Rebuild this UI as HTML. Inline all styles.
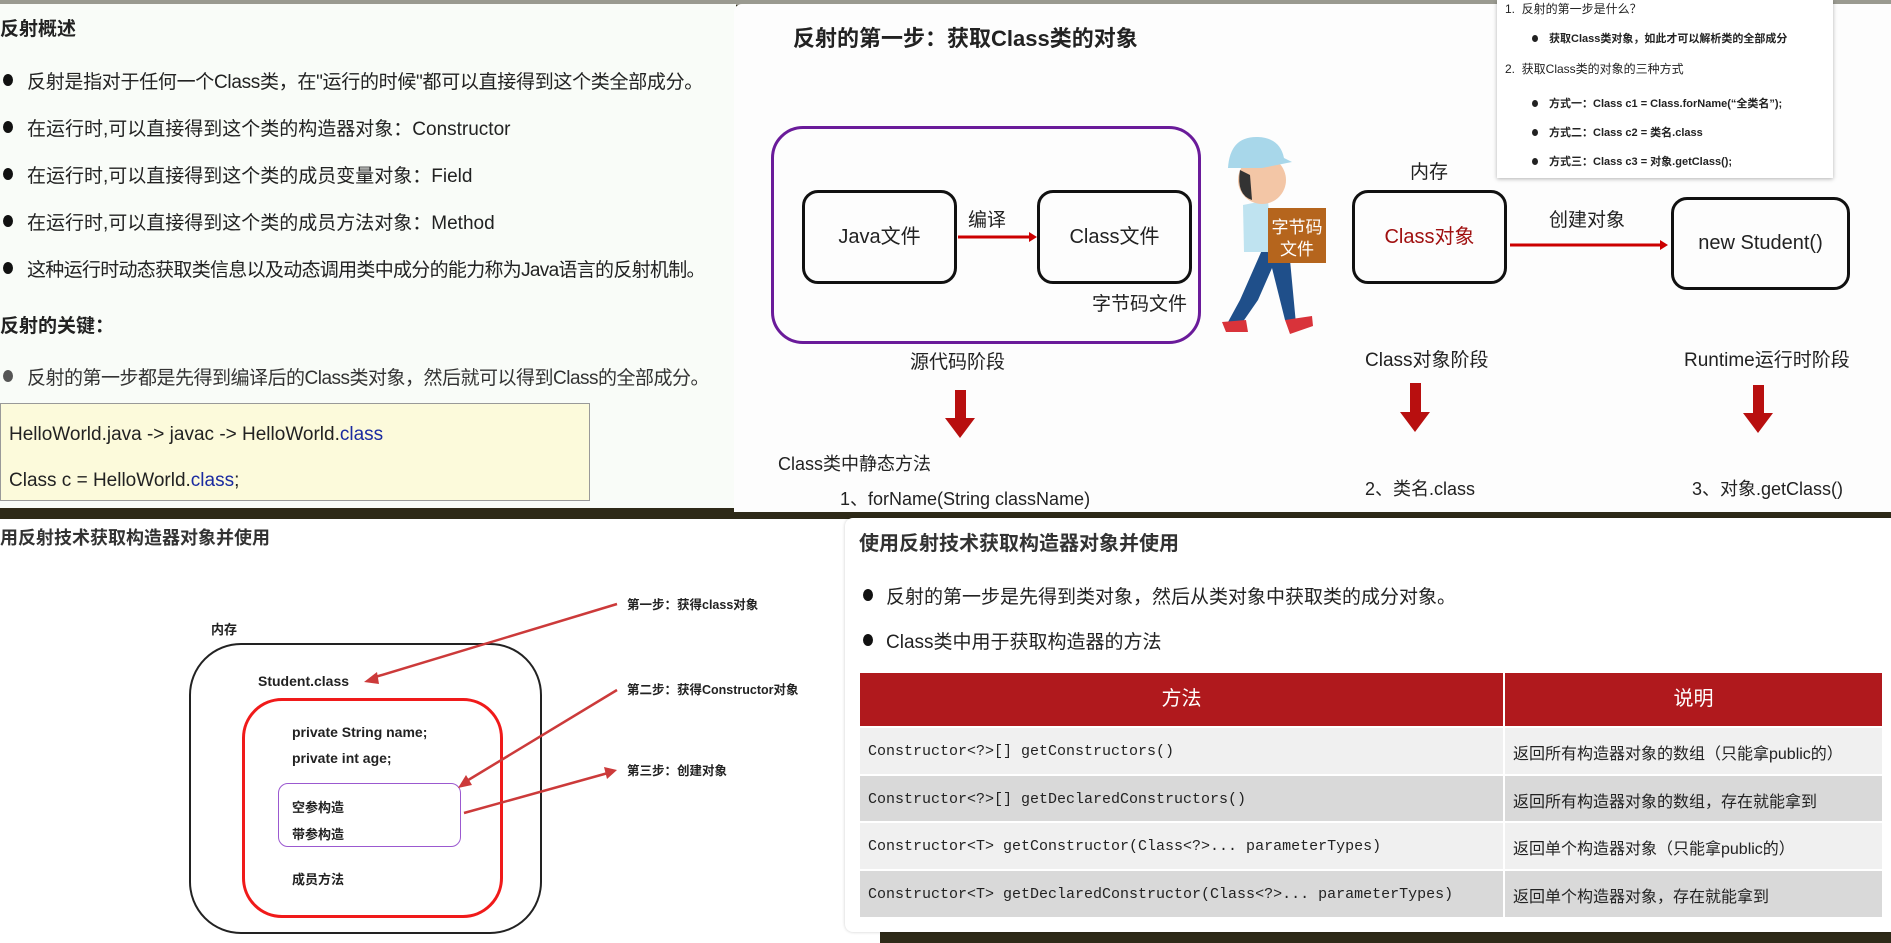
<!DOCTYPE html>
<html><head><meta charset="utf-8">
<style>
*{margin:0;padding:0;box-sizing:border-box}
body{width:1891px;height:943px;overflow:hidden;background:#2e2a18;position:relative;font-family:"Liberation Sans","Noto Sans CJK SC",sans-serif;color:#222}
.a{position:absolute;white-space:nowrap}
.b{font-weight:bold}
.dot{position:absolute;width:10px;height:12px;border-radius:50%;background:#111}
.mono{font-family:"Liberation Mono","Noto Sans CJK SC",monospace}
</style></head><body>
<div class="a" style="left:0;top:0;width:1891px;height:5px;background:#9a9a90"></div>

<!-- top-left panel -->
<div class="a" style="left:0;top:4px;width:736px;height:504px;background:#f9fcf8"></div>
<div class="a b" style="left:0;top:14px;font-size:19px">反射概述</div>
<div class="dot" style="left:3px;top:74px"></div><div class="a" style="left:27px;top:67px;font-size:19px;letter-spacing:-0.3px">反射是指对于任何一个Class类，在"运行的时候"都可以直接得到这个类全部成分。</div>
<div class="dot" style="left:3px;top:121px"></div><div class="a" style="left:27px;top:114px;font-size:19px">在运行时,可以直接得到这个类的构造器对象：Constructor</div>
<div class="dot" style="left:3px;top:168px"></div><div class="a" style="left:27px;top:161px;font-size:19px">在运行时,可以直接得到这个类的成员变量对象：Field</div>
<div class="dot" style="left:3px;top:215px"></div><div class="a" style="left:27px;top:208px;font-size:19px">在运行时,可以直接得到这个类的成员方法对象：Method</div>
<div class="dot" style="left:3px;top:262px"></div><div class="a" style="left:27px;top:255px;font-size:19px;letter-spacing:-0.7px">这种运行时动态获取类信息以及动态调用类中成分的能力称为Java语言的反射机制。</div>
<div class="a b" style="left:0;top:311px;font-size:19px">反射的关键：</div>
<div class="dot" style="left:3px;top:370px;background:#555"></div><div class="a" style="left:27px;top:363px;font-size:19px;letter-spacing:-0.5px;color:#333">反射的第一步都是先得到编译后的Class类对象，然后就可以得到Class的全部成分。</div>
<div class="a" style="left:0;top:403px;width:590px;height:98px;background:#fcfadb;border:1.5px solid #999"></div>
<div class="a" style="left:9px;top:424px;font-size:19px">HelloWorld.java -&gt; javac -&gt; HelloWorld.<span style="color:#1a2aa0">class</span></div>
<div class="a" style="left:9px;top:470px;font-size:19px">Class c = HelloWorld.<span style="color:#1a2aa0">class</span>;</div>

<!-- top-right panel -->
<div class="a" style="left:734px;top:4px;width:1157px;height:508px;background:#fdfdfd;border-radius:8px 0 0 0"></div>
<div class="a b" style="left:793px;top:21px;font-size:22px">反射的第一步：获取Class类的对象</div>
<div class="a" style="left:771px;top:126px;width:430px;height:218px;border:3px solid #6a1b9a;border-radius:32px"></div>
<div class="a" style="left:802px;top:190px;width:155px;height:94px;border:3px solid #111;border-radius:16px;font-size:20px;text-align:center;line-height:88px">Java文件</div>
<div class="a" style="left:1037px;top:190px;width:155px;height:94px;border:3px solid #111;border-radius:16px;font-size:20px;text-align:center;line-height:88px">Class文件</div>
<div class="a" style="left:968px;top:205px;font-size:19px">编译</div>
<div class="a" style="left:1092px;top:289px;font-size:19px">字节码文件</div>
<div class="a" style="left:910px;top:347px;font-size:19px">源代码阶段</div>
<div class="a" style="left:1352px;top:190px;width:155px;height:94px;border:3px solid #111;border-radius:16px;font-size:20px;text-align:center;line-height:88px;color:#a01010">Class对象</div>
<div class="a" style="left:1671px;top:197px;width:179px;height:93px;border:3px solid #111;border-radius:16px;font-size:20px;text-align:center;line-height:87px">new Student()</div>
<div class="a" style="left:1410px;top:157px;font-size:19px">内存</div>
<div class="a" style="left:1549px;top:205px;font-size:19px">创建对象</div>
<div class="a" style="left:1365px;top:345px;font-size:19px">Class对象阶段</div>
<div class="a" style="left:1684px;top:345px;font-size:19px">Runtime运行时阶段</div>
<div class="a" style="left:778px;top:450px;font-size:18px">Class类中静态方法</div>
<div class="a" style="left:840px;top:485px;font-size:18px">1、forName(String className)</div>
<div class="a" style="left:1365px;top:475px;font-size:18px">2、类名.class</div>
<div class="a" style="left:1692px;top:475px;font-size:18px">3、对象.getClass()</div>
<svg class="a" style="left:0;top:0" width="1891" height="943">
<g fill="#c00" stroke="#c00">
<line x1="958" y1="237" x2="1030" y2="237" stroke-width="3"/><polygon points="1037,237 1029,232 1029,242" stroke="none"/>
<line x1="1510" y1="245" x2="1660" y2="245" stroke-width="3"/><polygon points="1668,245 1660,240 1660,250" stroke="none"/>
</g>
<g fill="#b80f0f">
<polygon points="955,390 966,390 966,418 975,418 960,438 945,418 955,418"/>
<polygon points="1410,383 1421,383 1421,412 1430,412 1415,432 1400,412 1410,412"/>
<polygon points="1753,385 1764,385 1764,413 1773,413 1758,433 1743,413 1753,413"/>
</g>
<g>
<path d="M1262,250 L1240,300 L1228,322 L1240,326 L1258,300 L1272,268 L1285,320 L1296,324 L1290,260 Z" fill="#1f4f8a"/>
<path d="M1222,322 L1246,320 L1248,332 L1226,332 Z" fill="#d9333a"/>
<path d="M1285,320 L1312,316 L1313,326 L1290,334 Z" fill="#d9333a"/>
<path d="M1243,205 L1268,200 L1272,252 L1244,252 Z" fill="#bfe3f0"/>
<ellipse cx="1262" cy="180" rx="24" ry="24" fill="#f3c6a6"/>
<path d="M1240,170 Q1236,195 1252,200 L1250,175 Z" fill="#333"/>
<path d="M1228,168 Q1230,136 1258,137 Q1280,138 1284,158 L1292,162 L1262,168 Z" fill="#a8d7ea"/>
<rect x="1268" y="208" width="58" height="55" fill="#b5651d"/>
<text x="1297" y="233" font-size="17" fill="#fff" text-anchor="middle" font-family="Noto Sans CJK SC">字节码</text>
<text x="1297" y="255" font-size="17" fill="#fff" text-anchor="middle" font-family="Noto Sans CJK SC">文件</text>
</g>
</svg>
<!-- popup -->
<div class="a" style="left:1497px;top:0;width:336px;height:178px;background:#fff;box-shadow:0 1px 4px rgba(0,0,0,.3)"></div>
<div class="a" style="left:1505px;top:0;font-size:12px">1.&nbsp; 反射的第一步是什么？</div>
<div class="a" style="left:1532px;top:35px;width:6px;height:7px;border-radius:50%;background:#222"></div><div class="a b" style="left:1549px;top:30px;font-size:11px">获取Class类对象，如此才可以解析类的全部成分</div>
<div class="a" style="left:1505px;top:60px;font-size:12px">2.&nbsp; 获取Class类的对象的三种方式</div>
<div class="a" style="left:1532px;top:100px;width:6px;height:7px;border-radius:50%;background:#222"></div><div class="a b" style="left:1549px;top:95px;font-size:11px">方式一：Class c1 = Class.forName(“全类名”);</div>
<div class="a" style="left:1532px;top:129px;width:6px;height:7px;border-radius:50%;background:#222"></div><div class="a b" style="left:1549px;top:124px;font-size:11px">方式二：Class c2 = 类名.class</div>
<div class="a" style="left:1532px;top:158px;width:6px;height:7px;border-radius:50%;background:#222"></div><div class="a b" style="left:1549px;top:153px;font-size:11px">方式三：Class c3 = 对象.getClass();</div>

<!-- bottom-left panel -->
<div class="a" style="left:0;top:519px;width:880px;height:424px;background:#fff"></div>
<div class="a b" style="left:0;top:524px;font-size:18px;color:#333">用反射技术获取构造器对象并使用</div>
<div class="a b" style="left:211px;top:619px;font-size:13px">内存</div>
<div class="a" style="left:189px;top:643px;width:353px;height:291px;border:2px solid #222;border-radius:52px"></div>
<div class="a b" style="left:258px;top:673px;font-size:14px">Student.class</div>
<div class="a" style="left:242px;top:698px;width:261px;height:220px;border:3px solid #f01a1a;border-radius:40px"></div>
<div class="a b" style="left:292px;top:724px;font-size:14px">private String name;</div>
<div class="a b" style="left:292px;top:750px;font-size:14px">private int age;</div>
<div class="a" style="left:278px;top:783px;width:183px;height:64px;border:1.5px solid #9b59d0;border-radius:10px"></div>
<div class="a b" style="left:292px;top:797px;font-size:13px">空参构造</div>
<div class="a b" style="left:292px;top:824px;font-size:13px">带参构造</div>
<div class="a b" style="left:292px;top:869px;font-size:13px">成员方法</div>
<div class="a b" style="left:627px;top:594px;font-size:12.5px">第一步：获得class对象</div>
<div class="a b" style="left:627px;top:679px;font-size:12.5px">第二步：获得Constructor对象</div>
<div class="a b" style="left:627px;top:760px;font-size:12.5px">第三步：创建对象</div>
<svg class="a" style="left:0;top:0" width="900" height="943">
<g stroke="#cc3a3a" stroke-width="2.5" fill="#cc3a3a">
<line x1="617" y1="604" x2="372" y2="678"/><polygon points="364,682 377,672 379,684" stroke="none"/>
<line x1="617" y1="690" x2="465" y2="782"/><polygon points="458,788 466,775 472,785" stroke="none"/>
<line x1="464" y1="813" x2="608" y2="773"/><polygon points="617,770 604,767 607,779" stroke="none"/>
</g>
</svg>

<!-- bottom-right card -->
<div class="a" style="left:845px;top:518px;width:1046px;height:414px;background:#fff;border-radius:8px 0 0 8px;box-shadow:0 0 3px rgba(0,0,0,.2)"></div>
<div class="a b" style="left:859px;top:527px;font-size:20px;color:#333">使用反射技术获取构造器对象并使用</div>
<div class="dot" style="left:863px;top:589px"></div><div class="a" style="left:886px;top:582px;font-size:19px">反射的第一步是先得到类对象，然后从类对象中获取类的成分对象。</div>
<div class="dot" style="left:863px;top:634px"></div><div class="a" style="left:886px;top:627px;font-size:19px">Class类中用于获取构造器的方法</div>
<div class="a" style="left:860px;top:673px;width:1022px;height:244px">
<div class="a" style="left:0;top:0;width:643px;height:53px;background:#b0191d;color:#fff;font-size:20px;text-align:center;line-height:53px">方法</div>
<div class="a" style="left:645px;top:0;width:377px;height:53px;background:#b0191d;color:#fff;font-size:20px;text-align:center;line-height:53px">说明</div>
<div class="a" style="left:0;top:55px;width:643px;height:46px;background:#f0f0f0"></div><div class="a" style="left:645px;top:55px;width:377px;height:46px;background:#f0f0f0"></div>
<div class="a" style="left:0;top:103px;width:643px;height:45px;background:#d9d9d9"></div><div class="a" style="left:645px;top:103px;width:377px;height:45px;background:#d9d9d9"></div>
<div class="a" style="left:0;top:150px;width:643px;height:46px;background:#f0f0f0"></div><div class="a" style="left:645px;top:150px;width:377px;height:46px;background:#f0f0f0"></div>
<div class="a" style="left:0;top:198px;width:643px;height:46px;background:#d9d9d9"></div><div class="a" style="left:645px;top:198px;width:377px;height:46px;background:#d9d9d9"></div>
<div class="a mono" style="left:8px;top:70px;font-size:15px">Constructor&lt;?&gt;[] getConstructors()</div>
<div class="a mono" style="left:8px;top:118px;font-size:15px">Constructor&lt;?&gt;[] getDeclaredConstructors()</div>
<div class="a mono" style="left:8px;top:165px;font-size:15px">Constructor&lt;T&gt; getConstructor(Class&lt;?&gt;... parameterTypes)</div>
<div class="a mono" style="left:8px;top:213px;font-size:15px">Constructor&lt;T&gt; getDeclaredConstructor(Class&lt;?&gt;... parameterTypes)</div>
<div class="a" style="left:653px;top:67px;font-size:16px">返回所有构造器对象的数组（只能拿public的）</div>
<div class="a" style="left:653px;top:115px;font-size:16px">返回所有构造器对象的数组，存在就能拿到</div>
<div class="a" style="left:653px;top:162px;font-size:16px">返回单个构造器对象（只能拿public的）</div>
<div class="a" style="left:653px;top:210px;font-size:16px">返回单个构造器对象，存在就能拿到</div>
</div>
</body></html>
